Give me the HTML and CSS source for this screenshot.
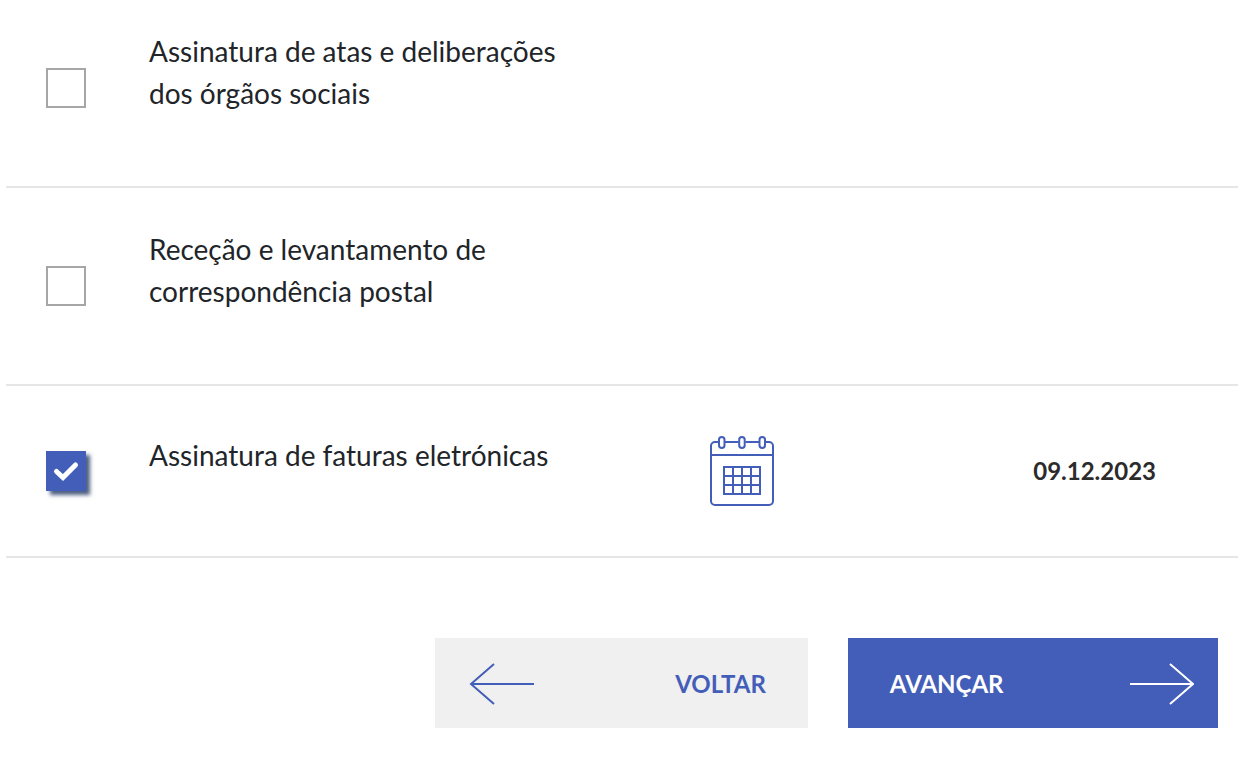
FILE: index.html
```
<!DOCTYPE html>
<html lang="pt">
<head>
    <meta charset="UTF-8">
    <meta name="viewport" content="width=device-width, initial-scale=1.0">
    <title>Poderes</title>
    <link rel="stylesheet" href="styles.css">
</head>
<body>
    <form>
        <div class="lista">
            <div class="linha">
                <input type="checkbox" id="atas">
                <label for="atas">Assinatura de atas e deliberações dos órgãos sociais</label>
            </div>
            <div class="linha">
                <input type="checkbox" id="correspondencia">
                <label for="correspondencia">Receção e levantamento de correspondência postal</label>
            </div>
            <div class="linha">
                <input type="checkbox" id="faturas" checked>
                <label for="faturas">Assinatura de faturas eletrónicas</label>
                <button type="button" class="calendario" aria-label="Escolher data">
                    <svg width="66" height="72" viewBox="0 0 66 72" fill="none" stroke="currentColor" stroke-width="2">
                        <path d="M9 7H6a4 4 0 0 0-4 4v55a4 4 0 0 0 4 4h54a4 4 0 0 0 4-4V11a4 4 0 0 0-4-4h-3M16 7h13.500M36.500 7h13.500M2 20h62"/>
                        <rect x="10" y="2" width="5.500" height="11" rx="2.750"/>
                        <rect x="30.200" y="2" width="5.500" height="11" rx="2.750"/>
                        <rect x="50.500" y="2" width="5.500" height="11" rx="2.750"/>
                        <path d="M15 32h36v27H15zM24 32v27M33 32v27M42 32v27M15 41h36M15 50h36"/>
                    </svg>
                </button>
                <span class="data">09.12.2023</span>
            </div>
        </div>
        <div class="botoes">
            <button type="button" class="botao voltar">
                <svg width="66" height="44" viewBox="0 0 66 44" fill="none" stroke="currentColor" stroke-width="2">
                    <path d="M65 23H2M25 3L2 23l23 20"/>
                </svg>
                <span>VOLTAR</span>
            </button>
            <button type="submit" class="botao avancar">
                <span>AVANÇAR</span>
                <svg width="66" height="44" viewBox="0 0 66 44" fill="none" stroke="currentColor" stroke-width="2">
                    <path d="M2 23h63M42 3l23 20-23 20"/>
                </svg>
            </button>
        </div>
    </form>
</body>
</html>
```
FILE: styles.css
```
* {
    box-sizing: border-box;
}

body {
    margin: 0;
    font-family: Lato, sans-serif;
    font-size: 28px;
    line-height: 42px;
    color: #212529;
    background-color: #fff;
}

.lista {
    margin: 0 4px 0 6px;
}

.linha {
    display: grid;
    grid-template-columns: 103px 412fr 362fr 315fr;
    align-items: center;
    min-height: 172px;
    padding: 40px 0 40px 40px;
    border-bottom: 2px solid #e6e6e6;
}

.linha:first-child {
    padding-top: 30px;
}

.linha label {
    margin-bottom: 32px;
}

input[type="checkbox"] {
    appearance: none;
    width: 40px;
    height: 40px;
    margin: 0;
    border: 2px solid #a6a6a6;
    background-color: #fff;
    cursor: pointer;
}

input[type="checkbox"]:checked {
    border: none;
    background: #435eb8 url("data:image/svg+xml,%3Csvg xmlns='http://www.w3.org/2000/svg' viewBox='0 0 40 40' fill='none' stroke='white' stroke-width='5' stroke-linecap='round'%3E%3Cpath d='M10.500 20.500l6.500 6L29.500 14'/%3E%3C/svg%3E") center / 40px no-repeat;
    box-shadow: 4px 4px 4px #4d5e80;
}

button {
    border: none;
    font-family: inherit;
    cursor: pointer;
}

.calendario {
    display: flex;
    justify-self: center;
    padding: 0;
    color: #435eb8;
    background: none;
}

.data {
    padding-right: 82px;
    font-size: 24px;
    font-weight: bold;
    text-align: right;
    color: #2b2b2b;
}

.botoes {
    display: grid;
    grid-template-columns: 373fr 370fr;
    gap: 40px;
    margin: 80px 24px 34px 35%;
}

.botao {
    display: flex;
    align-items: center;
    justify-content: space-between;
    height: 90px;
    font-size: 24px;
    font-weight: bold;
}

.voltar {
    padding: 0 42px 0 34px;
    color: #435eb8;
    background-color: #f0f0f0;
}

.avancar {
    padding: 0 24px 0 42px;
    color: #fff;
    background-color: #435eb8;
}
```
